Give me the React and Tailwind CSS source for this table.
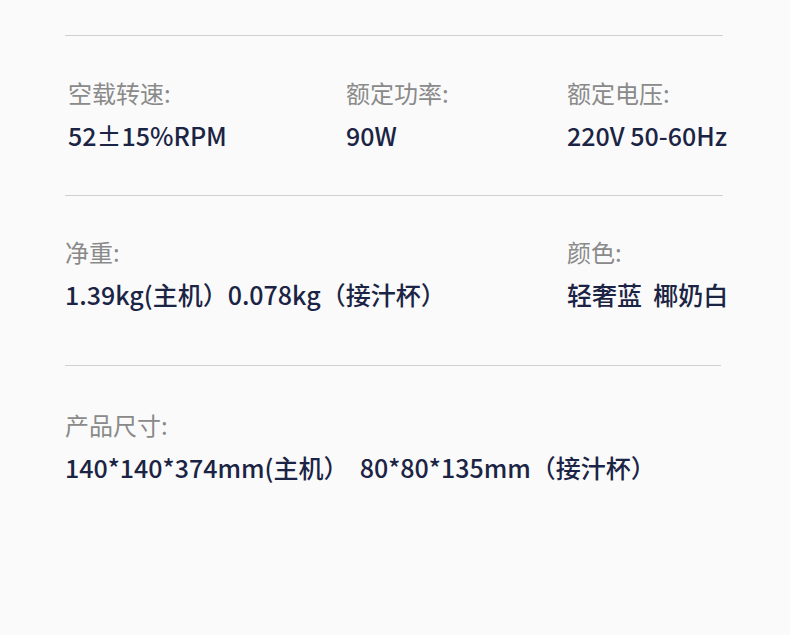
const font = { fontFamily: '"Noto Sans CJK SC", "Noto Sans", sans-serif' };

const Spec = ({ label, value }) => (
  <div className="flex flex-col gap-[10px]">
    <div className="text-[24px] leading-8 text-[#8a8a8a]">{label}</div>
    <div className="text-[25px] leading-8 font-medium text-[#1b2444] whitespace-pre">{value}</div>
  </div>
);

export default function App() {
  return (
    <div className="w-[790px] h-[635px] bg-[#fafafa] pt-[35px]" style={font}>
      <div className="ml-[65px] w-[658px]">
        {/* 转速 / 功率 / 电压 */}
        <div className="border-t border-[#d0d0d0] pt-[41px] pb-[44px] pl-[3px] grid grid-cols-[278px_221px_1fr]">
          <Spec label="空载转速:" value="52±15%RPM" />
          <Spec label="额定功率:" value="90W" />
          <Spec label="额定电压:" value="220V 50-60Hz" />
        </div>

        {/* 净重 / 颜色 */}
        <div className="border-t border-[#d0d0d0] pt-[40px] pb-[55px] grid grid-cols-[502px_1fr]">
          <Spec label="净重:" value="1.39kg(主机）0.078kg（接汁杯）" />
          <Spec label="颜色:" value="轻奢蓝  椰奶白" />
        </div>

        {/* 尺寸 */}
        <div className="border-t border-[#d0d0d0] pt-[43px] mr-[2px]">
          <Spec label="产品尺寸:" value="140*140*374mm(主机）  80*80*135mm（接汁杯）" />
        </div>
      </div>
    </div>
  );
}
